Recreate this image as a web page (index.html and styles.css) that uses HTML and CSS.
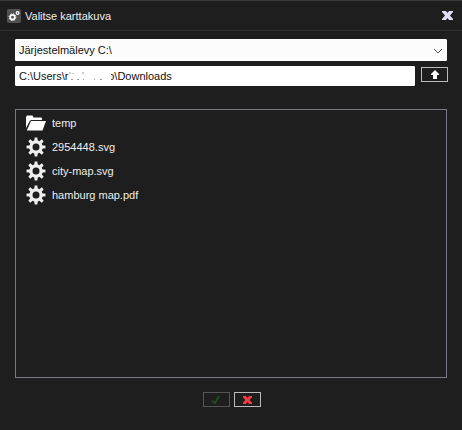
FILE: index.html
```html
<!DOCTYPE html>
<html lang="fi">
<head>
<meta charset="utf-8">
<title>Valitse karttakuva</title>
<link rel="stylesheet" href="styles.css">
</head>
<body>
<svg class="defs" aria-hidden="true">
  <symbol id="gear" viewBox="0 0 20 20">
    <g fill="currentColor">
      <path fill-rule="evenodd" d="M10 3.300a6.700 6.700 0 1 0 0 13.400a6.700 6.700 0 1 0 0-13.400zM10 6.500a3.500 3.500 0 1 1 0 7a3.500 3.500 0 1 1 0-7z"/>
      <g id="teeth">
        <path id="tooth" d="M8.200 4L8.700 .5h2.600L11.800 4z"/>
        <use href="#tooth" transform="rotate(45 10 10)"/>
        <use href="#tooth" transform="rotate(90 10 10)"/>
        <use href="#tooth" transform="rotate(135 10 10)"/>
      </g>
      <use href="#teeth" transform="rotate(180 10 10)"/>
    </g>
  </symbol>
</svg>
<main class="dialog">
  <header class="titlebar">
    <svg class="app-icon" viewBox="0 0 14 14" aria-hidden="true">
      <rect width="14" height="14" rx="2" fill="#505050"/>
      <circle cx="5.5" cy="8.2" r="2.3" fill="none" stroke="#fff" stroke-width="1.7"/>
      <circle cx="5.5" cy="8.2" r="3.4" fill="none" stroke="#fff" stroke-width="1" stroke-dasharray="1.3 1.37"/>
      <circle cx="10.6" cy="4" r="1.4" fill="none" stroke="#fff" stroke-width="1.2"/>
    </svg>
    <h1 class="title">Valitse karttakuva</h1>
    <button class="close" type="button" aria-label="Sulje">
      <svg viewBox="0 0 11 9" width="11" height="9"><path d="M0 0h4l1.500 2L7 0h4v1L8 4.500 11 8v1H7L5.500 7 4 9H0V8l3-3.500L0 1z" fill="#dedff0"/></svg>
    </button>
  </header>
  <form class="content">
    <div class="drive">
      <select class="field drive-select" aria-label="Levy"><option>Järjestelmälevy C:\</option></select>
      <svg class="chevron" viewBox="0 0 10 6" aria-hidden="true"><path d="M1 1l4 4 4-4" fill="none" stroke="#555" stroke-width="1"/></svg>
    </div>
    <div class="path-row">
      <div class="path">
        <input class="field path-input" type="text" aria-label="Polku" value="C:\Users\r&#160;&#160;&#160;&#160;&#160;&#160;&#160;&#160;&#160;&#160;&#160;&#160;&#160;o\Downloads">
        <svg class="redaction" viewBox="0 0 44 12" aria-hidden="true">
          <path d="M38 0h4v12h-4z" fill="#fff"/>
          <path d="M1 2v2M4 3v1M14 2v2M2 9.500h2M8 9.500h2M14 9.500h1M25 9.500h1M31 9.500h2" stroke="#999" fill="none"/>
        </svg>
      </div>
      <button class="small-button" type="button" aria-label="Ylös">
        <svg viewBox="0 0 8 9" width="8" height="9"><path d="M4 0l4 4v1H6v4H2V5H0V4z" fill="#fff"/></svg>
      </button>
    </div>
    <ul class="files">
      <li class="file"><svg class="file-icon" viewBox="0 0 20 16" aria-hidden="true"><path d="M0 13V2L1 .5h5.500l1 2H15q1 0 1 1V5H5L3.800 6z" fill="#fff"/><path d="M5 6h15l-3.500 9.500H.8z" fill="#fff"/></svg>temp</li>
      <li class="file"><svg class="file-icon" aria-hidden="true"><use href="#gear"/></svg>2954448.svg</li>
      <li class="file"><svg class="file-icon" aria-hidden="true"><use href="#gear"/></svg>city-map.svg</li>
      <li class="file"><svg class="file-icon" aria-hidden="true"><use href="#gear"/></svg>hamburg map.pdf</li>
    </ul>
    <div class="actions">
      <button class="small-button" type="button" aria-label="Hyväksy" disabled>
        <svg viewBox="0 0 10 10" width="10" height="10"><path d="M1 6l3 2L8 1" fill="none" stroke="#214b27" stroke-width="2"/></svg>
      </button>
      <button class="small-button" type="button" aria-label="Peruuta">
        <svg viewBox="0 0 9 8" width="9" height="8"><path d="M0 0h3l1.500 2L6 0h3v1.500L6.500 4 9 6.500V8H6L4.500 6 3 8H0V6.500L2.500 4 0 1.500z" fill="#f13d42"/></svg>
      </button>
    </div>
  </form>
</main>
</body>
</html>
```
FILE: styles.css
```css
* { box-sizing: border-box; }

body {
  margin: 0;
  background: #1e1e1e;
  color: #eee;
  font: 11px/16px "Liberation Sans", Arial, sans-serif;
}

button, input, select { font: inherit; }

svg { display: block; }

.defs {
  position: absolute;
  width: 0;
  height: 0;
}

.dialog {
  display: flex;
  flex-direction: column;
  min-height: 100vh;
  border-top: 1px solid #363a38;
}

.titlebar {
  display: flex;
  align-items: center;
  gap: 4px;
  height: 30px;
  padding: 0 9px 0 7px;
  border-bottom: 1px solid #303030;
}

.app-icon {
  width: 14px;
  height: 14px;
}

.title {
  flex: 1;
  margin: 0;
  font-size: 11px;
  font-weight: normal;
}

.close {
  padding: 0;
  border: 0;
  background: none;
}

.content {
  flex: 1;
  display: flex;
  flex-direction: column;
  padding: 8px 14px 23px 15px;
}

.field {
  display: block;
  width: 100%;
  margin: 0;
  padding: 0 3px;
  border: 1px solid #fff;
  border-radius: 1px;
  background: #fff;
  color: #111;
}

.drive {
  position: relative;
  margin-right: 1px;
}

.drive-select {
  height: 22px;
  appearance: none;
  background: #fcfcfc;
}

.chevron {
  position: absolute;
  top: 9px;
  right: 4px;
  width: 10px;
  height: 6px;
}

.path-row {
  display: flex;
  align-items: flex-start;
  gap: 6px;
  margin-top: 5px;
}

.path {
  position: relative;
  flex: 1;
}

.path-row .small-button { margin-top: 1px; }

.path-input { height: 20px; }

.redaction {
  position: absolute;
  top: 4px;
  left: 54px;
  width: 44px;
  height: 12px;
}

.small-button {
  display: flex;
  align-items: center;
  justify-content: center;
  width: 27px;
  height: 15px;
  padding: 0;
  border: 1px solid #bbb;
  background: #1e1e1e;
}

.small-button:disabled { border-color: #555; }

.files {
  flex: 1;
  margin: 23px 1px 14px 0;
  padding: 1px 10px;
  border: 1px solid #777a80;
  list-style: none;
}

.file {
  display: flex;
  align-items: center;
  gap: 6px;
  height: 24px;
}

.file-icon {
  width: 20px;
  height: 20px;
}

.actions {
  display: flex;
  justify-content: center;
  gap: 4px;
}
```
